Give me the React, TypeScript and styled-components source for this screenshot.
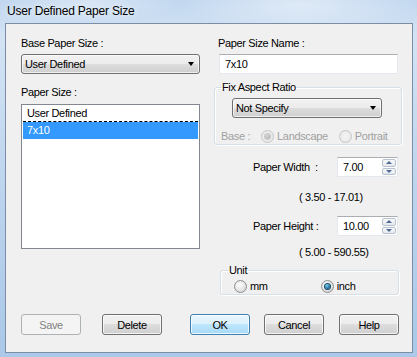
import styled, { createGlobalStyle } from "styled-components";

const GlobalStyle = createGlobalStyle`
  html, body {
    margin: 0;
    padding: 0;
  }
  body {
    width: 417px;
    height: 357px;
    overflow: hidden;
    font-family: "Liberation Sans", Arial, sans-serif;
    font-size: 11px;
    letter-spacing: -0.35px;
    color: #000;
  }
`;

const Frame = styled.div`
  width: 417px;
  height: 357px;
  box-sizing: border-box;
  padding: 0 4px 4px 5px;
  display: flex;
  flex-direction: column;
  background:
    radial-gradient(ellipse 120px 30px at 300px 4px, rgba(255, 255, 255, 0.45), transparent),
    radial-gradient(ellipse 90px 20px at 90px 2px, rgba(255, 255, 255, 0.35), transparent),
    linear-gradient(180deg, #c1d7ef 0%, #d3e3f4 10%, #b9d2ed 60%, #aac8e8 100%);
`;

const TitleBar = styled.div`
  height: 23px;
  line-height: 23px;
  padding-left: 2px;
  font-size: 12px;
  letter-spacing: -0.2px;
  color: #000;
  text-shadow: 0 0 6px rgba(255, 255, 255, 0.9);
`;

const Client = styled.div`
  flex: 1;
  background: #f0f0f0;
  border: 1px solid #7b8ea6;
  display: flex;
  flex-direction: column;
`;

const Columns = styled.div`
  display: grid;
  grid-template-columns: 179px 188px;
  column-gap: 14px;
  padding: 12px 0 0 15px;
  align-items: start;
`;

const Column = styled.div`
  display: flex;
  flex-direction: column;
`;

const Label = styled.div<{ $mt?: number; $ml?: number }>`
  height: 14px;
  line-height: 14px;
  margin-top: ${(p) => p.$mt ?? 0}px;
  margin-left: ${(p) => p.$ml ?? 0}px;
  white-space: pre;
`;

const Combo = styled.div<{ $mt?: number; $ml?: number; $w?: number }>`
  box-sizing: border-box;
  height: 20px;
  width: ${(p) => (p.$w ? `${p.$w}px` : "auto")};
  margin-top: ${(p) => p.$mt ?? 0}px;
  margin-left: ${(p) => p.$ml ?? 0}px;
  border: 1px solid #707070;
  border-radius: 3px;
  background: linear-gradient(180deg, #f2f2f2 0%, #ebebeb 50%, #dddddd 50%, #cfcfcf 100%);
  box-shadow: inset 0 0 0 1px rgba(255, 255, 255, 0.7);
  display: flex;
  align-items: center;
  justify-content: space-between;
  padding: 0 5px 0 3px;
`;

const ComboArrow = styled.span`
  width: 0;
  height: 0;
  border-left: 3.5px solid transparent;
  border-right: 3.5px solid transparent;
  border-top: 4px solid #000;
`;

const ListBox = styled.div`
  box-sizing: border-box;
  margin-top: 5px;
  height: 145px;
  border: 1px solid #828790;
  background: #fff;
  padding: 0 1px;
`;

const ListItem = styled.div<{ $selected?: boolean; $focusLine?: boolean }>`
  box-sizing: border-box;
  height: 17px;
  line-height: 16px;
  padding-left: 4px;
  background: ${(p) => (p.$selected ? "#3399ff" : "transparent")};
  color: ${(p) => (p.$selected ? "#fff" : "#000")};
  border-bottom: 1px ${(p) => (p.$focusLine ? "dashed #000" : "solid transparent")};
`;

const TextBox = styled.div<{ $mt?: number; $ml?: number }>`
  box-sizing: border-box;
  height: 20px;
  width: 179px;
  margin-top: ${(p) => p.$mt ?? 0}px;
  margin-left: ${(p) => p.$ml ?? 0}px;
  background: #fff;
  border: 1px solid #e3e9ef;
  border-top-color: #abadb3;
  display: flex;
  align-items: center;
  padding-left: 5px;
`;

const Group = styled.fieldset<{ $mt?: number; $ml?: number; $w?: number; $pl?: number }>`
  box-sizing: border-box;
  margin: ${(p) => p.$mt ?? 0}px 0 0 ${(p) => p.$ml ?? 0}px;
  width: ${(p) => (p.$w ? `${p.$w}px` : "auto")};
  border: 1px solid #d5dfe5;
  border-radius: 3px;
  box-shadow: inset 1px 1px 0 #fff, 1px 1px 0 #fff;
  padding: 0 0 1px ${(p) => p.$pl ?? 6}px;
  min-width: 0;
`;

const Legend = styled.legend`
  padding: 0 1px;
  height: 14px;
  line-height: 14px;
`;

const RadioRow = styled.div<{ $mt?: number; $ml?: number; $gap: number; $disabled?: boolean }>`
  display: flex;
  align-items: center;
  height: 14px;
  margin-top: ${(p) => p.$mt ?? 0}px;
  margin-left: ${(p) => p.$ml ?? 0}px;
  gap: ${(p) => p.$gap}px;
  color: ${(p) => (p.$disabled ? "#a0a0a0" : "#000")};
`;

const RadioOption = styled.div`
  display: flex;
  align-items: center;
  gap: 3px;
`;

const RadioCircle = styled.span<{ $checked?: boolean; $disabled?: boolean }>`
  box-sizing: border-box;
  width: 13px;
  height: 13px;
  border-radius: 50%;
  border: 1px solid ${(p) => (p.$disabled ? "#c5c5c5" : "#8e8f8f")};
  background: ${(p) =>
    p.$disabled
      ? "radial-gradient(circle at 50% 50%, #f4f4f4, #e6e6e6)"
      : "radial-gradient(circle at 40% 35%, #ffffff, #dcdcdc 70%, #cbcbcb)"};
  display: flex;
  align-items: center;
  justify-content: center;

  &::after {
    content: "";
    display: ${(p) => (p.$checked ? "block" : "none")};
    width: 5px;
    height: 5px;
    border-radius: 50%;
    background: ${(p) =>
      p.$disabled
        ? "radial-gradient(circle at 40% 35%, #d8d8d8, #a8a8a8)"
        : "radial-gradient(circle at 40% 35%, #7fd3f7, #1e6f9a 60%, #0c3a55)"};
    box-shadow: ${(p) => (p.$disabled ? "0 0 0 1px #c9c9c9" : "0 0 0 1px #1b4b6b")};
  }
`;

const FieldRow = styled.div<{ $mt: number }>`
  display: flex;
  align-items: center;
  height: 20px;
  margin-top: ${(p) => p.$mt}px;
  padding-left: 39px;
`;

const FieldLabel = styled.span`
  width: 84px;
  white-space: pre;
`;

const SpinBox = styled.div`
  display: flex;
  height: 20px;
  width: 61px;
`;

const SpinInput = styled.div`
  box-sizing: border-box;
  flex: 1;
  background: #fff;
  border: 1px solid #e3e9ef;
  border-top-color: #abadb3;
  border-right: none;
  display: flex;
  align-items: center;
  padding-left: 5px;
`;

const SpinButtons = styled.div`
  box-sizing: border-box;
  width: 16px;
  background: #fff;
  border: 1px solid #e3e9ef;
  border-top-color: #abadb3;
  border-left: none;
  display: flex;
  flex-direction: column;
  padding: 1px 1px 1px 0;
  gap: 1px;
`;

const SpinButton = styled.div<{ $up?: boolean }>`
  flex: 1;
  border: 1px solid #b8c3cf;
  border-radius: 2px;
  background: linear-gradient(180deg, #f7f8fa, #e4e8ee);
  display: flex;
  align-items: center;
  justify-content: center;

  &::after {
    content: "";
    width: 0;
    height: 0;
    border-left: 3px solid transparent;
    border-right: 3px solid transparent;
    ${(p) => (p.$up ? "border-bottom: 3px solid #4f6a93;" : "border-top: 3px solid #4f6a93;")}
  }
`;

const Range = styled.div<{ $mt: number }>`
  height: 14px;
  line-height: 14px;
  margin-top: ${(p) => p.$mt}px;
  padding-left: 85px;
`;

const ButtonRow = styled.div`
  display: flex;
  margin-top: 19px;
  padding-left: 15px;
`;

type Variant = "normal" | "default" | "disabled";

const Button = styled.div<{ $ml?: number; $variant?: Variant }>`
  box-sizing: border-box;
  width: 60px;
  height: 21px;
  margin-left: ${(p) => p.$ml ?? 0}px;
  border-radius: 3px;
  display: flex;
  align-items: center;
  justify-content: center;
  border: 1px solid
    ${(p) => (p.$variant === "default" ? "#3c7fb1" : p.$variant === "disabled" ? "#adb2b5" : "#707070")};
  color: ${(p) => (p.$variant === "disabled" ? "#838383" : "#000")};
  background: ${(p) =>
    p.$variant === "default"
      ? "linear-gradient(180deg, #eaf6fd 0%, #d9f0fc 50%, #bee6fd 50%, #a7d9f5 100%)"
      : p.$variant === "disabled"
        ? "#f4f4f4"
        : "linear-gradient(180deg, #f2f2f2 0%, #ebebeb 50%, #dddddd 50%, #cfcfcf 100%)"};
  box-shadow: inset 0 0 0 1px
    ${(p) => (p.$variant === "disabled" ? "transparent" : "rgba(255, 255, 255, 0.75)")};
`;

export default function App() {
  return (
    <>
      <GlobalStyle />
      <Frame>
        <TitleBar>User Defined Paper Size</TitleBar>
        <Client>
          <Columns>
            <Column>
              <Label>Base Paper Size :</Label>
              <Combo $mt={4}>
                <span>User Defined</span>
                <ComboArrow />
              </Combo>
              <Label $mt={11}>Paper Size :</Label>
              <ListBox>
                <ListItem $focusLine>User Defined</ListItem>
                <ListItem $selected>7x10</ListItem>
              </ListBox>
            </Column>
            <Column>
              <Label $ml={4}>Paper Size Name :</Label>
              <TextBox $mt={4} $ml={5}>7x10</TextBox>
              <Group $mt={6}>
                <Legend>Fix Aspect Ratio</Legend>
                <Combo $mt={4} $ml={11} $w={150}>
                  <span>Not Specify</span>
                  <ComboArrow />
                </Combo>
                <RadioRow $mt={11} $gap={11} $disabled>
                  <span>Base :</span>
                  <RadioOption>
                    <RadioCircle $checked $disabled />
                    <span>Landscape</span>
                  </RadioOption>
                  <RadioOption>
                    <RadioCircle $disabled />
                    <span>Portrait</span>
                  </RadioOption>
                </RadioRow>
              </Group>
              <FieldRow $mt={12}>
                <FieldLabel>Paper Width  :</FieldLabel>
                <SpinBox>
                  <SpinInput>7.00</SpinInput>
                  <SpinButtons>
                    <SpinButton $up />
                    <SpinButton />
                  </SpinButtons>
                </SpinBox>
              </FieldRow>
              <Range $mt={13}>( 3.50 - 17.01)</Range>
              <FieldRow $mt={12}>
                <FieldLabel>Paper Height :</FieldLabel>
                <SpinBox>
                  <SpinInput>10.00</SpinInput>
                  <SpinButtons>
                    <SpinButton $up />
                    <SpinButton />
                  </SpinButtons>
                </SpinBox>
              </FieldRow>
              <Range $mt={9}>( 5.00 - 590.55)</Range>
              <Group $mt={4} $ml={6} $w={179} $pl={7}>
                <Legend>Unit</Legend>
                <RadioRow $mt={2} $ml={6} $gap={53}>
                  <RadioOption>
                    <RadioCircle />
                    <span>mm</span>
                  </RadioOption>
                  <RadioOption>
                    <RadioCircle $checked />
                    <span>inch</span>
                  </RadioOption>
                </RadioRow>
              </Group>
            </Column>
          </Columns>
          <ButtonRow>
            <Button $variant="disabled">Save</Button>
            <Button $ml={21}>Delete</Button>
            <Button $ml={28} $variant="default">OK</Button>
            <Button $ml={14}>Cancel</Button>
            <Button $ml={15}>Help</Button>
          </ButtonRow>
        </Client>
      </Frame>
    </>
  );
}
